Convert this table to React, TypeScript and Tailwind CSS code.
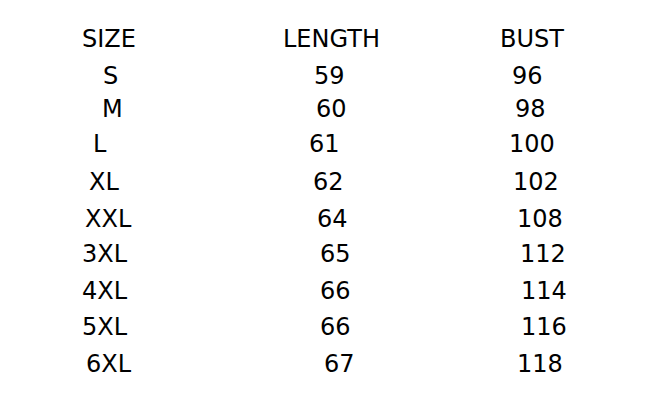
import React from "react";

type Row = { h: string; a: [string, string]; b: [string, string]; c: [string, string] };

const rows: Row[] = [
  { h: "h-[37px]", a: ["SIZE", "pl-[82px]"], b: ["LENGTH", "pl-[13px]"], c: ["BUST", "pl-[20px]"] },
  { h: "h-[33px]", a: ["S", "pl-[103px]"], b: ["59", "pl-[44px]"], c: ["96", "pl-[32px]"] },
  { h: "h-[35px]", a: ["M", "pl-[102px]"], b: ["60", "pl-[46px]"], c: ["98", "pl-[35px]"] },
  { h: "h-[38px]", a: ["L", "pl-[93px]"], b: ["61", "pl-[39px]"], c: ["100", "pl-[29px]"] },
  { h: "h-[37px]", a: ["XL", "pl-[89px]"], b: ["62", "pl-[43px]"], c: ["102", "pl-[33px]"] },
  { h: "h-[35px]", a: ["XXL", "pl-[85px]"], b: ["64", "pl-[47px]"], c: ["108", "pl-[37px]"] },
  { h: "h-[37px]", a: ["3XL", "pl-[82px]"], b: ["65", "pl-[50px]"], c: ["112", "pl-[40px]"] },
  { h: "h-[36px]", a: ["4XL", "pl-[82px]"], b: ["66", "pl-[50px]"], c: ["114", "pl-[41px]"] },
  { h: "h-[37px]", a: ["5XL", "pl-[82px]"], b: ["66", "pl-[50px]"], c: ["116", "pl-[41px]"] },
  { h: "h-[36px]", a: ["6XL", "pl-[86px]"], b: ["67", "pl-[54px]"], c: ["118", "pl-[37px]"] },
];

export default function App() {
  return (
    <div
      className="w-[649px] h-[410px] bg-white text-black pt-[21px] text-[24px] leading-[36px] overflow-hidden"
      style={{ fontFamily: '"DejaVu Sans", Verdana, sans-serif' }}
    >
      {rows.map((r, i) => (
        <div key={i} className={`flex ${r.h}`}>
          <div className={`w-[270px] shrink-0 whitespace-nowrap ${r.a[1]}`}>{r.a[0]}</div>
          <div className={`w-[210px] shrink-0 whitespace-nowrap ${r.b[1]}`}>{r.b[0]}</div>
          <div className={`flex-1 whitespace-nowrap ${r.c[1]}`}>{r.c[0]}</div>
        </div>
      ))}
    </div>
  );
}
